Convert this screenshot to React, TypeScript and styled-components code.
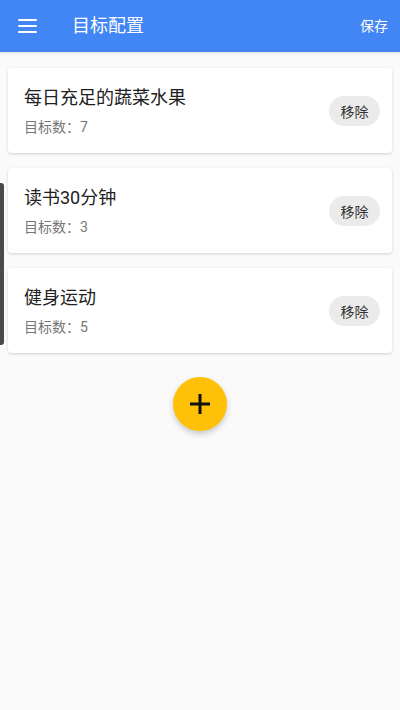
import React from "react";
import styled, { createGlobalStyle } from "styled-components";

const Global = createGlobalStyle`
  html, body { margin: 0; padding: 0; background: #fafafa; }
  body { font-family: Roboto, "Noto Sans CJK SC", "Noto Sans", sans-serif; }
  * { box-sizing: border-box; }
`;

const Page = styled.div`
  position: relative;
  width: 400px;
  height: 710px;
  background: #fafafa;
  overflow: hidden;
`;

const Header = styled.header`
  height: 52px;
  background: #4285f4;
  display: flex;
  align-items: center;
  padding: 0 12px 0 18px;
  color: #fff;
  box-shadow: 0 1px 3px rgba(0, 0, 0, 0.12);
`;

const MenuButton = styled.div`
  width: 19px;
  height: 14px;
  display: flex;
  flex-direction: column;
  justify-content: space-between;
  margin-right: 35px;
  span {
    display: block;
    height: 2px;
    background: #fff;
    border-radius: 1px;
  }
`;

const Title = styled.h1`
  margin: 0;
  flex: 1;
  font-size: 18px;
  font-weight: 400;
  line-height: 24px;
`;

const SaveButton = styled.span`
  font-size: 14px;
  line-height: 20px;
`;

const List = styled.div`
  display: flex;
  flex-direction: column;
  gap: 15px;
  padding: 16px 8px 0;
`;

const Card = styled.div`
  height: 85px;
  background: #fff;
  border-radius: 4px;
  box-shadow: 0 1px 3px rgba(0, 0, 0, 0.16);
  display: flex;
  align-items: center;
  padding: 1px 12px 0 16px;
`;

const CardText = styled.div`
  flex: 1;
  display: flex;
  flex-direction: column;
  gap: 7px;
`;

const GoalName = styled.div`
  font-size: 18px;
  line-height: 24px;
  color: #212121;
`;

const GoalCount = styled.div`
  font-size: 14px;
  line-height: 20px;
  color: #757575;
`;

const RemoveButton = styled.button`
  width: 51px;
  height: 30px;
  border: none;
  border-radius: 15px;
  background: #ebebeb;
  color: #333;
  font-family: inherit;
  font-size: 14px;
  padding: 0;
`;

const FabRow = styled.div`
  display: flex;
  justify-content: center;
  padding-top: 24px;
`;

const Fab = styled.button`
  width: 54px;
  height: 54px;
  border-radius: 50%;
  border: none;
  background: #ffc107;
  box-shadow: 0 3px 6px rgba(0, 0, 0, 0.2);
  display: flex;
  align-items: center;
  justify-content: center;
  padding: 0;
`;

const EdgeHandle = styled.div`
  position: absolute;
  left: 0;
  top: 183px;
  width: 4px;
  height: 162px;
  background: #4a4a4a;
  border-radius: 0 3px 3px 0;
`;

const goals = [
  { name: "每日充足的蔬菜水果", count: 7 },
  { name: "读书30分钟", count: 3 },
  { name: "健身运动", count: 5 },
];

export default function App() {
  return (
    <Page>
      <Global />
      <Header>
        <MenuButton>
          <span />
          <span />
          <span />
        </MenuButton>
        <Title>目标配置</Title>
        <SaveButton>保存</SaveButton>
      </Header>
      <List>
        {goals.map((g) => (
          <Card key={g.name}>
            <CardText>
              <GoalName>{g.name}</GoalName>
              <GoalCount>目标数：{g.count}</GoalCount>
            </CardText>
            <RemoveButton>移除</RemoveButton>
          </Card>
        ))}
      </List>
      <FabRow>
        <Fab aria-label="add">
          <svg width="24" height="24" viewBox="0 0 24 24">
            <path d="M12 2v20M2 12h20" stroke="#111" strokeWidth="3" strokeLinecap="butt" />
          </svg>
        </Fab>
      </FabRow>
      <EdgeHandle />
    </Page>
  );
}
